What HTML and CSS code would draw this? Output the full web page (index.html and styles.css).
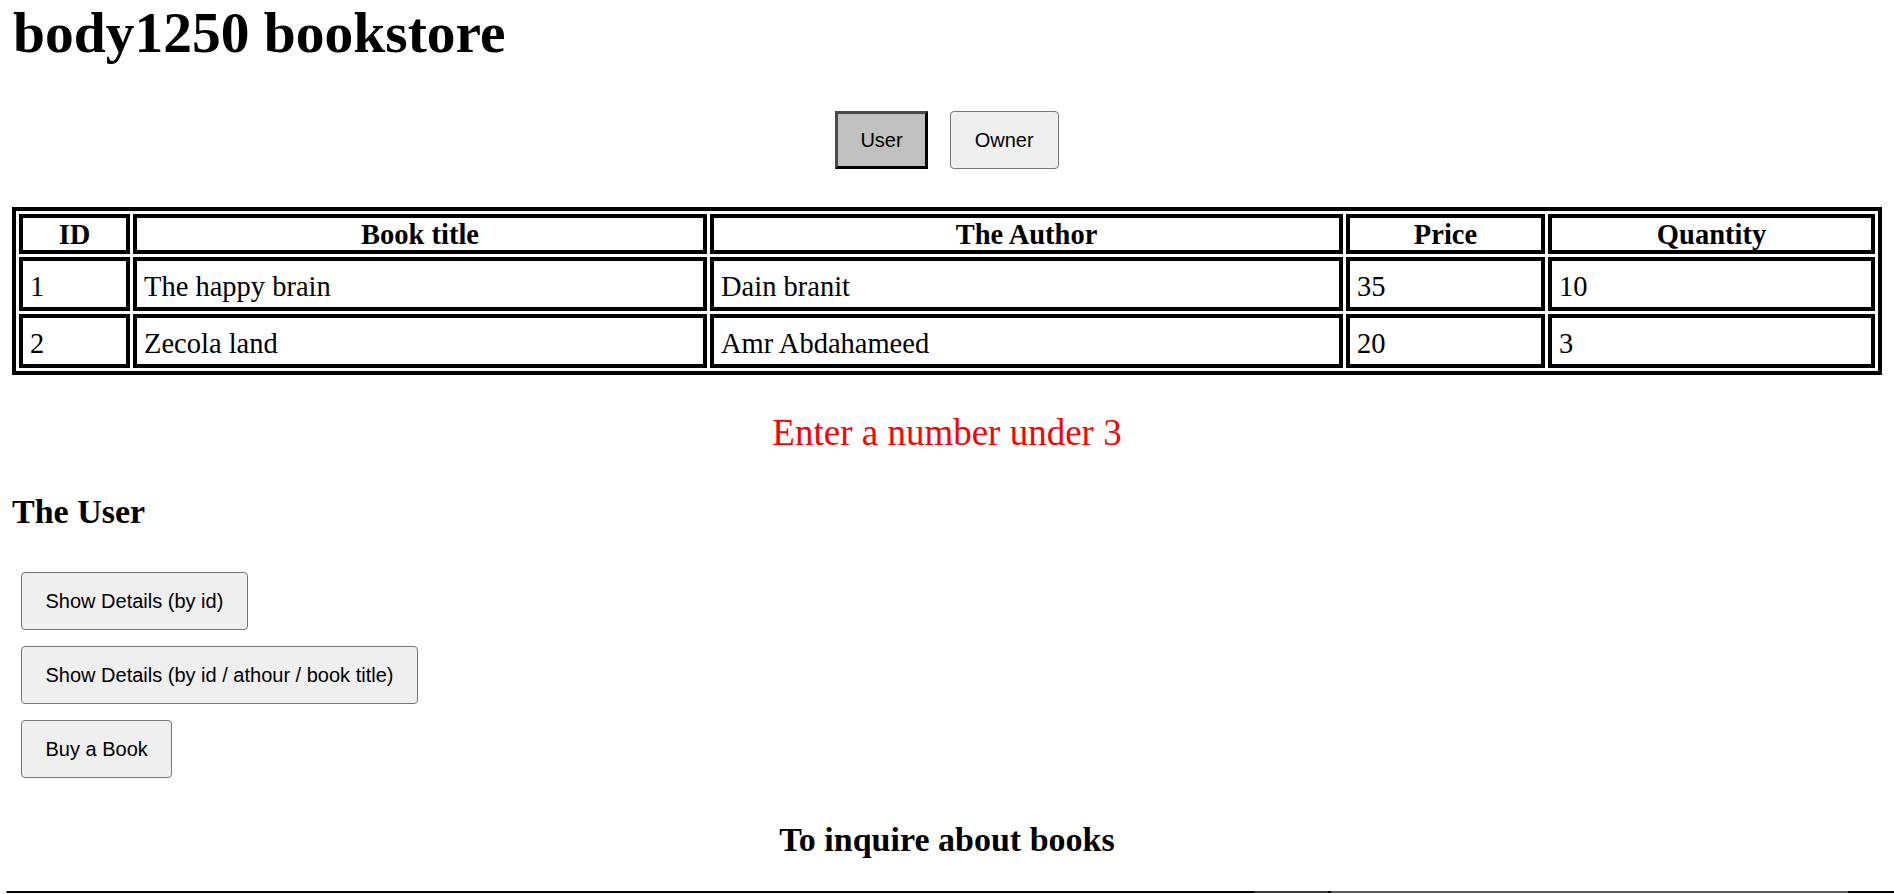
FILE: index.html
```html
<!DOCTYPE html>
<html lang="en">
<head>
<meta charset="utf-8">
<title>body1250 bookstore</title>
<link rel="stylesheet" href="styles.css">
</head>
<body>
  <h1 class="title">body1250 bookstore</h1>

  <nav class="mode-nav">
    <button class="nav-btn nav-btn-active" type="button">User</button>
    <button class="nav-btn" type="button">Owner</button>
  </nav>

  <table class="books">
    <thead>
      <tr>
        <th class="col-id">ID</th>
        <th class="col-title">Book title</th>
        <th class="col-author">The Author</th>
        <th class="col-price">Price</th>
        <th class="col-qty">Quantity</th>
      </tr>
    </thead>
    <tbody>
      <tr>
        <td>1</td>
        <td>The happy brain</td>
        <td>Dain branit</td>
        <td>35</td>
        <td>10</td>
      </tr>
      <tr>
        <td>2</td>
        <td>Zecola land</td>
        <td>Amr Abdahameed</td>
        <td>20</td>
        <td>3</td>
      </tr>
    </tbody>
  </table>

  <p class="warning">Enter a number under 3</p>

  <h2 class="section-title">The User</h2>

  <div class="actions">
    <button class="action-btn" type="button">Show Details (by id)</button>
    <button class="action-btn" type="button">Show Details (by id / athour / book title)</button>
    <button class="action-btn" type="button">Buy a Book</button>
  </div>

  <h2 class="section-title section-center">To inquire about books</h2>

  <div class="inquire-edge">
    <span class="edge-a"></span>
    <span class="edge-b"></span>
    <span class="edge-c"></span>
    <span class="edge-d"></span>
    <span class="edge-e"></span>
    <span class="edge-f"></span>
  </div>
</body>
</html>
```

FILE: styles.css
```css
html {
  overflow: hidden;
}

body {
  margin: 0;
  padding: 0 12px;
  font-family: "Liberation Serif", "Times New Roman", serif;
  color: #000;
  background: #fff;
}

.title {
  margin: 0;
  padding-left: 1px;
  font-size: 57.5px;
  line-height: 65px;
  font-weight: bold;
}

.mode-nav {
  display: flex;
  justify-content: center;
  gap: 22px;
  margin-top: 46px;
}

.nav-btn,
.action-btn {
  height: 58px;
  font-family: "Liberation Sans", Arial, sans-serif;
  font-size: 20px;
  color: #000;
  background: #efefef;
  border: 1px solid #767676;
  border-radius: 4px;
  box-sizing: border-box;
}

.nav-btn {
  padding: 0 24px;
}

.nav-btn-active {
  padding: 0 22px;
  background: #c0c0c0;
  border: 3px solid;
  border-color: #4a4a4a #000 #000 #4a4a4a;
  border-radius: 0;
}

.books {
  width: 100%;
  margin-top: 38px;
  table-layout: fixed;
  border: 4px solid #000;
  border-spacing: 3px;
  font-size: 28.5px;
}

.books th,
.books td {
  border: 4px solid #000;
  box-sizing: border-box;
}

.books th {
  padding: 1px 6px 0;
  font-weight: bold;
  text-align: center;
  line-height: 31px;
}

.books td {
  padding: 8.5px 7px 4.5px;
  line-height: 33px;
  text-align: left;
}

.col-id { width: 111px; }
.col-title { width: 574px; }
.col-author { width: 633px; }
.col-price { width: 199px; }
.col-qty { width: 327px; }

.warning {
  margin: 36px 0 0;
  font-size: 37px;
  line-height: 43px;
  color: #ff0000;
  text-align: center;
}

.section-title {
  margin: 39px 0 0;
  font-size: 34px;
  line-height: 38px;
  font-weight: bold;
}

.section-center {
  margin-top: 43px;
  text-align: center;
}

.actions {
  display: flex;
  flex-direction: column;
  align-items: flex-start;
  gap: 16px;
  margin: 41px 0 0 9px;
}

.action-btn {
  padding: 0 23.5px;
}

.inquire-edge {
  display: flex;
  height: 2px;
  margin: 32px -12px 0 -6px;
}

.inquire-edge span {
  display: block;
  height: 2px;
}

.edge-a { width: 1px; background: #8a8a8a; }
.edge-b { width: 1247px; background: #000; }
.edge-c { width: 74px; background: #3a3a3a; }
.edge-d { width: 3px; background: #000; }
.edge-e { width: 517px; background: #5a5a5a; }
.edge-f { flex: 1; background: #000; }
```
